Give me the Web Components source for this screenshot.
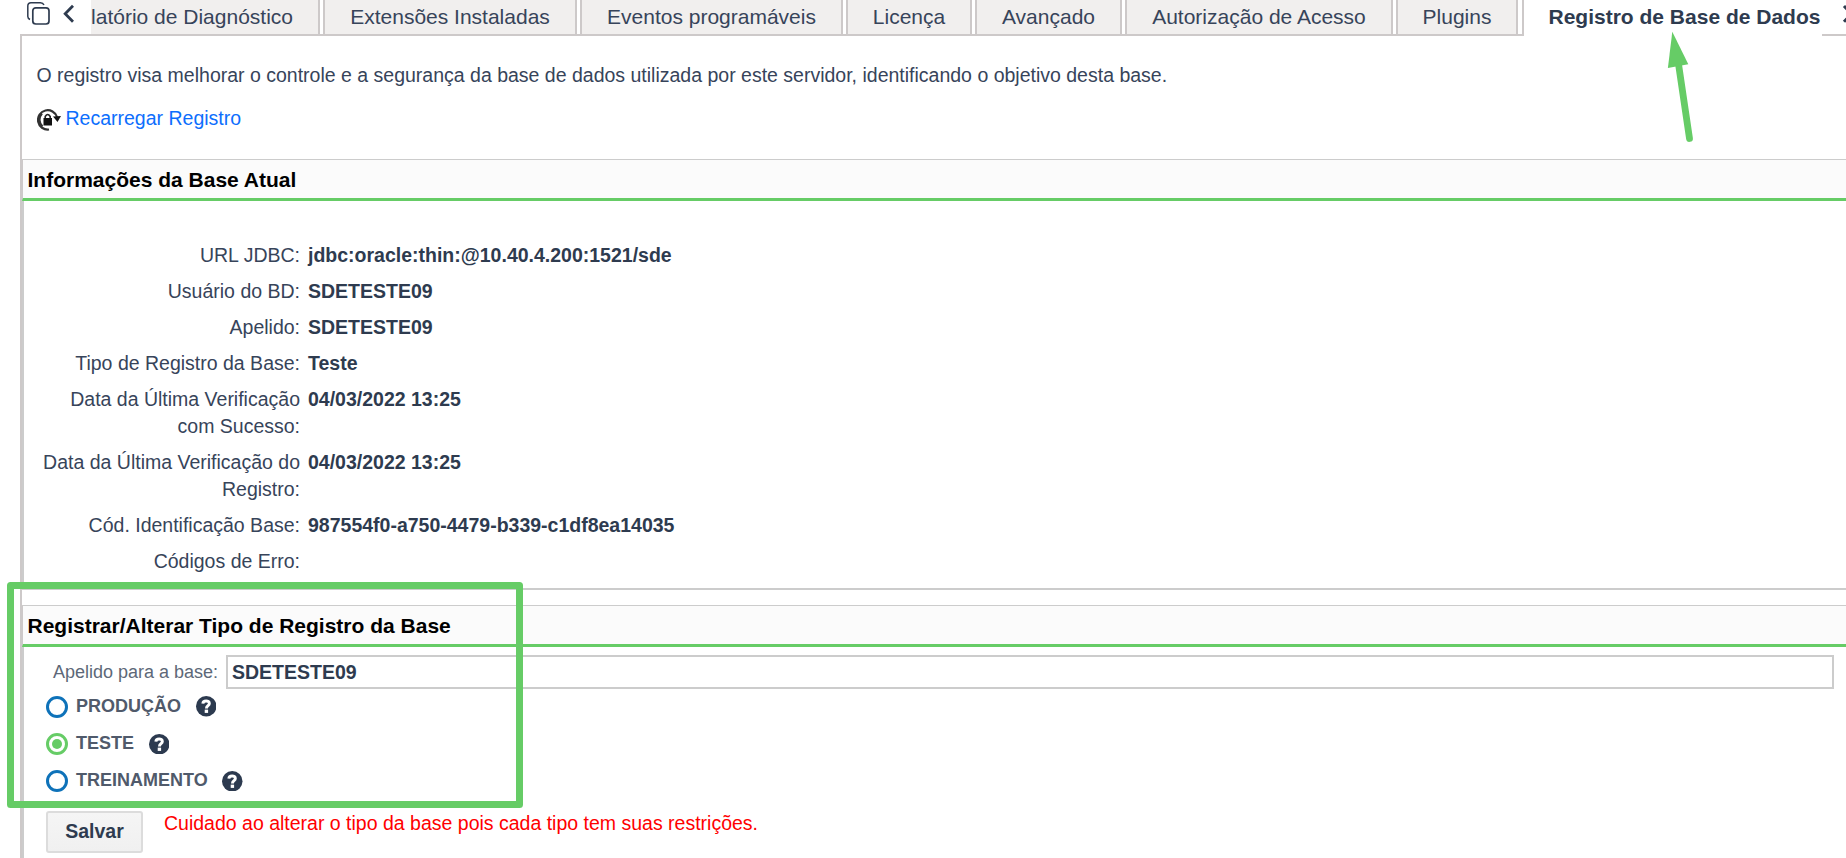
<!DOCTYPE html>
<html lang="pt-BR">
<head>
<meta charset="utf-8">
<title>Registro de Base de Dados</title>
<style>
  html, body {
    margin: 0;
    height: 858px;
    overflow: hidden;
    background: #fff;
  }
  body {
    font-family: "Liberation Sans", Arial, sans-serif;
    font-size: 19.5px;
    line-height: 27px;
    color: #37445a;
  }
</style>
</head>
<body>
<registro-app></registro-app>
<script>
  class TabItem extends HTMLElement {
    constructor() {
      super();
      this.attachShadow({ mode: 'open' });
      this.shadowRoot.innerHTML = `
        <style>
          :host {
            display: flex;
            justify-content: center;
            box-sizing: border-box;
            flex: none;
            height: 36px;
            margin-right: 3px;
            border: 2px solid #cdc9c9;
            border-top: none;
            background: #f1efee;
            font-size: 21px;
            line-height: 34px;
            white-space: nowrap;
          }
          :host([first]) {
            border-left: none;
            justify-content: flex-end;
            padding-right: 25px;
          }
          :host([active]) {
            justify-content: flex-start;
            margin-left: 1px;
            margin-right: 0;
            padding-left: 24.5px;
            border-right: none;
            border-bottom: none;
            background: #fff;
            color: #2e3b4f;
            font-weight: bold;
          }
        </style>
        <slot></slot>
      `;
    }
  }
  customElements.define('tab-item', TabItem);

  class TabBar extends HTMLElement {
    constructor() {
      super();
      this.attachShadow({ mode: 'open' });
      this.shadowRoot.innerHTML = `
        <style>
          :host {
            display: flex;
            height: 36px;
            padding-left: 20px;
            background: linear-gradient(#cdc9c9, #cdc9c9) 20px 34px / 1503px 2px no-repeat;
          }
          .tools {
            flex: none;
            width: 71px;
            height: 34px;
          }
          .next {
            flex: 1;
            border-bottom: 2px solid #cdc9c9;
            height: 34px;
            overflow: hidden;
          }
          svg {
            display: block;
          }
        </style>
        <div class="tools">
          <svg width="71" height="34" viewBox="20 0 71 34" fill="none" stroke="#2e3b4f">
            <path d="M30 19.5Q27.8 18.5 27.8 16.5V6Q27.8 2.8 31 2.8H40.5Q43 2.8 44 5" stroke-width="1.5"/>
            <rect x="32.800" y="7.800" width="16.200" height="16.200" rx="3" stroke-width="1.700"/>
            <path d="M73 5.800L65.200 13.800L73 21.800" stroke-width="2.800"/>
          </svg>
        </div>
        <slot></slot>
        <div class="next">
          <svg width="24" height="34" viewBox="1822 0 24 34" fill="none" stroke="#2e3b4f">
            <path d="M1844 6L1851.5 13.8L1844 21.8" stroke-width="3"/>
          </svg>
        </div>
      `;
    }
  }
  customElements.define('tab-bar', TabBar);

  class InfoSection extends HTMLElement {
    constructor() {
      super();
      this.attachShadow({ mode: 'open' });
      this.shadowRoot.innerHTML = `
        <style>
          :host {
            display: block;
          }
          .header {
            box-sizing: border-box;
            height: 42px;
            padding-left: 4.5px;
            border-top: 1px solid #ccc;
            border-left: 1px solid #cdc9c9;
            border-bottom: 3px solid #66cc66;
            background: #fbfbfb;
            color: #000;
            font-size: 21px;
            font-weight: bold;
            line-height: 40px;
          }
          .body {
            border-left: 2px solid #ccc;
            border-bottom: 2px solid #ccc;
          }
          :host([open]) .body {
            border-bottom: none;
            min-height: 211px;
          }
        </style>
        <div class="header">${this.getAttribute('heading')}</div>
        <div class="body"><slot></slot></div>
      `;
    }
  }
  customElements.define('info-section', InfoSection);

  class InfoRow extends HTMLElement {
    constructor() {
      super();
      this.attachShadow({ mode: 'open' });
      this.shadowRoot.innerHTML = `
        <style>
          :host {
            display: grid;
            grid-template-columns: 263px 1fr;
            column-gap: 8px;
            padding: 4px 0 5px 13px;
          }
          .label {
            text-align: right;
          }
          .value {
            color: #2e3b4f;
            font-weight: bold;
          }
        </style>
        <div class="label">${this.getAttribute('label')}</div>
        <div class="value"><slot></slot></div>
      `;
    }
  }
  customElements.define('info-row', InfoRow);

  class RadioOption extends HTMLElement {
    constructor() {
      super();
      this.attachShadow({ mode: 'open' });
      this.shadowRoot.innerHTML = `
        <style>
          :host {
            display: flex;
            align-items: center;
            height: 37.2px;
            padding-left: 22px;
            font-size: 18px;
            font-weight: bold;
            color: #505a6b;
          }
          .radio {
            display: flex;
            box-sizing: border-box;
            width: 22px;
            height: 22px;
            margin-right: 8px;
            border: 3px solid #0e72b9;
            border-radius: 50%;
          }
          :host([checked]) .radio {
            border-color: #66cc66;
          }
          :host([checked]) .radio::after {
            content: "";
            width: 10px;
            height: 10px;
            margin: auto;
            border-radius: 50%;
            background: #66cc66;
          }
          svg {
            margin-left: 14.5px;
          }
        </style>
        <span class="radio"></span>
        <slot></slot>
        <svg width="20.5" height="20.5" viewBox="0 0 20 20">
          <circle cx="10" cy="10" r="10" fill="#2c3a4f"/>
          <path d="M6.7 7.5C6.900 4 13 4 13 7.300C13 9.600 10.200 9.300 10.200 12.200" fill="none" stroke="#fff" stroke-width="2.900"/>
          <rect x="8.500" y="13.300" width="3.300" height="3.200" fill="#fff"/>
        </svg>
      `;
    }
  }
  customElements.define('radio-option', RadioOption);

  class TextField extends HTMLElement {
    constructor() {
      super();
      this.attachShadow({ mode: 'open' });
      this.shadowRoot.innerHTML = `
        <style>
          :host {
            display: flex;
            align-items: center;
            padding: 8px 12px 0 29px;
          }
          label {
            flex: none;
            width: 173px;
            padding-top: 1px;
            font-size: 18px;
            color: #5d6878;
          }
          .input {
            flex: 1;
            box-sizing: border-box;
            height: 34px;
            padding-left: 4px;
            border: 2px solid #ccc;
            color: #2e3b4f;
            font-weight: bold;
            line-height: 30px;
          }
        </style>
        <label>${this.getAttribute('label')}</label>
        <div class="input"><slot></slot></div>
      `;
    }
  }
  customElements.define('text-field', TextField);

  class MarkOverlay extends HTMLElement {
    constructor() {
      super();
      this.attachShadow({ mode: 'open' });
      this.shadowRoot.innerHTML = `
        <style>
          :host {
            position: absolute;
            top: 0;
            left: 0;
            pointer-events: none;
          }
          svg {
            display: block;
          }
        </style>
        <svg width="1846" height="858" fill="none" stroke="#66cc66">
          <rect x="10.5" y="585.5" width="509" height="219" stroke-width="7" stroke-linejoin="round"/>
          <path d="M1678.5 64L1689.5 138.5" stroke-width="6.8" stroke-linecap="round"/>
          <path d="M1672.3 31.7L1688.3 64.3L1667.9 68Z" fill="#66cc66" stroke="none"/>
        </svg>
      `;
    }
  }
  customElements.define('mark-overlay', MarkOverlay);

  class RegistroApp extends HTMLElement {
    constructor() {
      super();
      this.attachShadow({ mode: 'open' });
      this.shadowRoot.innerHTML = `
        <style>
          :host {
            display: block;
          }
          main {
            box-sizing: border-box;
            height: 822px;
            margin-left: 20px;
            border-left: 2px solid #cdc9c9;
            overflow: hidden;
          }
          .intro {
            height: 123px;
            padding-left: 14.5px;
            box-sizing: border-box;
            padding-top: 26px;
          }
          p {
            margin: 0 0 16px;
          }
          .reload {
            display: flex;
            align-items: center;
            gap: 5px;
            color: #0d6efd;
          }
          .rows {
            padding: 37px 0 8px;
          }
          .second {
            margin-top: 15px;
          }
          .options {
            margin-top: -1px;
            padding-bottom: 11px;
          }
          .actions {
            display: flex;
            align-items: flex-start;
            gap: 21px;
            padding-left: 22px;
          }
          button {
            box-sizing: border-box;
            width: 97px;
            height: 42px;
            padding: 0;
            border: 2px solid #dcdcdc;
            border-radius: 3px;
            background: linear-gradient(#f5f5f5, #f0f0f0);
            font: bold 19.5px "Liberation Sans", Arial, sans-serif;
            color: #2e3b4f;
          }
          .warning {
            color: #f00;
            line-height: 25px;
          }
        </style>
        <tab-bar>
          <tab-item first style="width: 229px">latório de Diagnóstico</tab-item>
          <tab-item style="width: 254px">Extensões Instaladas</tab-item>
          <tab-item style="width: 263px">Eventos programáveis</tab-item>
          <tab-item style="width: 126px">Licença</tab-item>
          <tab-item style="width: 147px">Avançado</tab-item>
          <tab-item style="width: 268px">Autorização de Acesso</tab-item>
          <tab-item style="width: 122px">Plugins</tab-item>
          <tab-item active style="width: 300px">Registro de Base de Dados</tab-item>
        </tab-bar>
        <main>
          <div class="intro">
            <p>O registro visa melhorar o controle e a segurança da base de dados utilizada por este servidor, identificando o objetivo desta base.</p>
            <div class="reload">
              <svg width="24" height="24" viewBox="0 0 24 24">
                <path d="M12 22.5A9.700 9.700 0 1 1 20 10" fill="none" stroke="#333" stroke-width="2.200"/>
                <path d="M5.500 19.500A9 9 0 0 1 5 6.500" fill="none" stroke="#333" stroke-width="2.200"/>
                <path d="M16 9.500L24 9L20.500 15Z" fill="#111"/>
                <rect x="6.500" y="11" width="8.500" height="7.500" fill="#111"/>
                <path d="M8.200 11V9.500Q10.700 5.500 13.200 9.500V11" fill="none" stroke="#222" stroke-width="1.600"/>
              </svg>
              <span>Recarregar Registro</span>
            </div>
          </div>
          <info-section heading="Informações da Base Atual">
            <div class="rows">
              <info-row label="URL JDBC:">jdbc:oracle:thin:@10.40.4.200:1521/sde</info-row>
              <info-row label="Usuário do BD:">SDETESTE09</info-row>
              <info-row label="Apelido:">SDETESTE09</info-row>
              <info-row label="Tipo de Registro da Base:">Teste</info-row>
              <info-row label="Data da Última Verificação com Sucesso:">04/03/2022 13:25</info-row>
              <info-row label="Data da Última Verificação do Registro:">04/03/2022 13:25</info-row>
              <info-row label="Cód. Identificação Base:">987554f0-a750-4479-b339-c1df8ea14035</info-row>
              <info-row label="Códigos de Erro:"></info-row>
            </div>
          </info-section>
          <info-section open class="second" heading="Registrar/Alterar Tipo de Registro da Base">
            <text-field label="Apelido para a base:">SDETESTE09</text-field>
            <div class="options">
              <radio-option>PRODUÇÃO</radio-option>
              <radio-option checked>TESTE</radio-option>
              <radio-option>TREINAMENTO</radio-option>
            </div>
            <div class="actions">
              <button>Salvar</button>
              <span class="warning">Cuidado ao alterar o tipo da base pois cada tipo tem suas restrições.</span>
            </div>
          </info-section>
        </main>
        <mark-overlay></mark-overlay>
      `;
    }
  }
  customElements.define('registro-app', RegistroApp);
</script>
</body>
</html>
